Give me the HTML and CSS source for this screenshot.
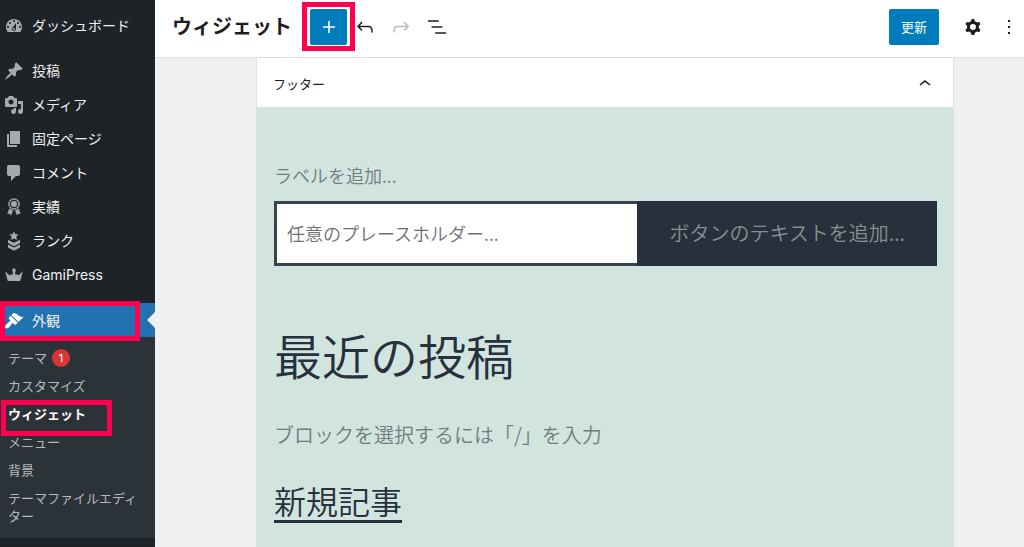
FILE: index.html
```html
<!DOCTYPE html>
<html lang="ja">
<head>
    <meta charset="UTF-8">
    <meta name="viewport" content="width=device-width, initial-scale=1.0">
    <title>ウィジェット</title>
    <link rel="stylesheet" href="styles.css">
</head>
<body>
    <nav class="sidebar">
        <ul class="menu">
            <li>
                <a href="#"><svg viewBox="0 0 20 20"><path d="M3.76 16h12.48c1.1-1.37 1.76-3.11 1.76-5 0-4.42-3.58-8-8-8s-8 3.58-8 8c0 1.89.66 3.63 1.76 5zM10 4c.55 0 1 .45 1 1s-.45 1-1 1-1-.45-1-1 .45-1 1-1zM6 6c.55 0 1 .45 1 1s-.45 1-1 1-1-.45-1-1 .45-1 1-1zm8 0c.55 0 1 .45 1 1s-.45 1-1 1-1-.45-1-1 .45-1 1-1zm-5.37 5.55L12 7v6c0 1.1-.9 2-2 2s-2-.9-2-2c0-.57.24-1.08.63-1.45zM4 10c.55 0 1 .45 1 1s-.45 1-1 1-1-.45-1-1 .45-1 1-1zm12 0c.55 0 1 .45 1 1s-.45 1-1 1-1-.45-1-1 .45-1 1-1zm-5 3c0-.55-.45-1-1-1s-1 .45-1 1 .45 1 1 1 1-.45 1-1z"/></svg>ダッシュボード</a>
            </li>
            <li class="separator"></li>
            <li>
                <a href="#"><svg viewBox="0 0 20 20"><path d="M10.44 3.02l1.82-1.82 6.36 6.35-1.83 1.82c-1.05-.68-2.48-.57-3.41.36l-.75.75c-.92.93-1.04 2.35-.35 3.41l-1.83 1.82-2.41-2.41-2.8 2.79c-.42.42-3.38 2.71-3.8 2.29s1.86-3.39 2.28-3.81l2.79-2.79L4.1 9.36l1.83-1.82c1.05.69 2.48.57 3.4-.36l.75-.75c.93-.92 1.05-2.35.36-3.41z"/></svg>投稿</a>
            </li>
            <li>
                <a href="#"><svg viewBox="0 0 20 20"><path d="M13 11V4c0-.55-.45-1-1-1h-1.67L9 1H5L3.67 3H2c-.55 0-1 .45-1 1v7c0 .55.45 1 1 1h10c.55 0 1-.45 1-1zM7 4.5c1.38 0 2.5 1.12 2.5 2.5S8.38 9.5 7 9.5 4.5 8.38 4.5 7 5.62 4.5 7 4.5zM14 6h5v10.5c0 1.38-1.12 2.5-2.5 2.5S14 17.88 14 16.5s1.12-2.5 2.5-2.5c.17 0 .34.02.5.05V9h-3V6zm-4 8.05V13h2v3.5c0 1.38-1.12 2.5-2.5 2.5S7 17.88 7 16.5 8.12 14 9.5 14c.17 0 .34.02.5.05z"/></svg>メディア</a>
            </li>
            <li>
                <a href="#"><svg viewBox="0 0 20 20"><path d="M6 15V2h10v13H6zm-1 1h8v2H3V5h2v11z"/></svg>固定ページ</a>
            </li>
            <li>
                <a href="#"><svg viewBox="0 0 20 20"><path d="M5 2h9c1.1 0 2 .9 2 2v7c0 1.1-.9 2-2 2h-2l-5 5v-5H5c-1.1 0-2-.9-2-2V4c0-1.1.9-2 2-2z"/></svg>コメント</a>
            </li>
            <li>
                <a href="#"><svg viewBox="0 0 20 20"><circle cx="10" cy="7" r="5" fill="none" stroke="currentColor" stroke-width="1.6" stroke-dasharray="2.2 .4"/><circle cx="10" cy="7" r="3"/><path d="M5.2 11.5l3.8 2-2 5-1.3-1.7-2.4.2zM14.8 11.5l-3.8 2 2 5 1.3-1.7 2.4.2z"/></svg>実績</a>
            </li>
            <li>
                <a href="#"><svg viewBox="0 0 20 20"><path d="M10 .3l1.4 2.900 3.200.4-2.300 2.200.6 3.200L10 7.500 7.100 9l.6-3.200-2.300-2.200 3.200-.4zM4 8.800l6 3 6-3v3.200l-6 3.200L4 12zM4 13.600l6 3 6-3v3l-6 3.200-6-3.200z"/></svg>ランク</a>
            </li>
            <li>
                <a href="#"><svg viewBox="0 0 20 20"><path d="M1 6l4.200 4.200 2.400-1 .6 1.200.8-2.800L8 5.300l2-2.500 2 2.500-1 2.300.8 2.800.6-1.200 2.400 1L19 6l-2.800 10H3.800z"/></svg>GamiPress</a>
            </li>
            <li class="separator wide"></li>
            <li class="current">
                <a href="#"><svg viewBox="0 0 20 20"><path d="M14.480 11.060L7.410 3.990l1.500-1.500c.5-.56 2.300-.47 3.510.32 1.210.8 1.430 1.280 2.910 2.100 1.180.64 2.450 1.260 4.450.85zm-.71.71L6.700 4.700 4.930 6.470c-.39.39-.39 1.020 0 1.410l1.060 1.060c.39.39.39 1.030 0 1.420-.6.6-1.430 1.110-2.210 1.690-.35.26-.7.53-1.010.84C1.430 14.230.4 16.080 1.400 17.070c.99 1 2.840-.03 4.180-1.360.31-.31.58-.66.85-1.020.57-.78 1.080-1.610 1.690-2.210.39-.39 1.020-.39 1.410 0l1.060 1.060c.39.39 1.020.39 1.410 0z"/></svg>外観</a>
                <span class="mark mark-menu"></span>
            </li>
        </ul>
        <ul class="submenu">
            <li><a href="#">テーマ<span class="badge">1</span></a></li>
            <li><a href="#">カスタマイズ</a></li>
            <li class="active"><a href="#">ウィジェット</a><span class="mark mark-submenu"></span></li>
            <li><a href="#">メニュー</a></li>
            <li><a href="#">背景</a></li>
            <li><a href="#">テーマファイルエディター</a></li>
        </ul>
    </nav>

    <div class="editor">
        <header class="toolbar">
            <h1>ウィジェット</h1>
            <div class="tools">
                <div class="inserter">
                    <button class="primary add" aria-label="ブロックを追加"><svg viewBox="0 0 24 24"><path d="M18 11.200h-5.200V6h-1.600v5.200H6v1.600h5.200V18h1.600v-5.200H18z"/></svg></button>
                    <span class="mark mark-add"></span>
                </div>
                <button class="icon" aria-label="元に戻す"><svg viewBox="0 0 24 24"><path d="M18.300 11.700c-.6-.6-1.400-.9-2.300-.9H6.700l2.900-3.300-1.100-1-4.500 5L8.500 16l1-1-2.700-2.700H16c.5 0 .9.2 1.300.5 1 1 1 3.400 1 4.500v.3h1.500v-.2c0-1.500 0-4.300-1.500-5.700z"/></svg></button>
                <button class="icon" aria-label="やり直す" disabled><svg viewBox="0 0 24 24"><path d="M15.600 6.500l-1.100 1 2.900 3.300H8c-.9 0-1.700.3-2.300.9-1.400 1.500-1.400 4.200-1.400 5.600v.2h1.500v-.3c0-1.100 0-3.500 1-4.500.3-.3.7-.5 1.300-.5h9.200L14.500 15l1.100 1.100 4.600-4.600-4.600-5z"/></svg></button>
                <button class="icon" aria-label="リスト表示"><svg viewBox="0 0 24 24"><path d="M13.800 5.200H3v1.500h10.800V5.200zm-3.600 12v1.500H21v-1.500H10.200zm7.200-6H6.600v1.500h10.800v-1.500z"/></svg></button>
            </div>
            <div class="actions">
                <button class="primary update">更新</button>
                <button class="icon" aria-label="設定"><svg viewBox="0 0 24 24"><path fill-rule="evenodd" d="M10.289 4.836A1 1 0 0111.275 4h1.306a1 1 0 01.987.836l.244 1.466c.787.26 1.503.679 2.108 1.218l1.393-.522a1 1 0 011.216.437l.653 1.130a1 1 0 01-.23 1.273l-1.148.944a6.025 6.025 0 010 2.435l1.149.946a1 1 0 01.23 1.272l-.653 1.130a1 1 0 01-1.216.437l-1.394-.522c-.605.54-1.320.958-2.108 1.218l-.244 1.466a1 1 0 01-.987.836h-1.306a1 1 0 01-.986-.836l-.244-1.466a5.995 5.995 0 01-2.108-1.218l-1.394.522a1 1 0 01-1.217-.436l-.653-1.131a1 1 0 01.23-1.272l1.149-.946a6.026 6.026 0 010-2.435l-1.148-.944a1 1 0 01-.23-1.272l.653-1.131a1 1 0 011.217-.437l1.393.522a5.994 5.994 0 012.108-1.218l.244-1.466zM14.929 12a3 3 0 11-6 0 3 3 0 016 0z"/></svg></button>
                <button class="icon more" aria-label="オプション"><svg viewBox="0 0 24 24"><path d="M13 19h-2v-2h2v2zm0-6h-2v-2h2v2zm0-6h-2V5h2v2z"/></svg></button>
            </div>
        </header>

        <main class="content">
            <section class="area">
                <button class="area-title">フッター<svg viewBox="0 0 24 24"><path d="M6.500 12.400L12 8l5.500 4.400-.9 1.200L12 10l-4.500 3.600-1-1.200z"/></svg></button>
                <div class="blocks">
                    <label class="search-label" for="search">ラベルを追加...</label>
                    <div class="search">
                        <input type="text" id="search" placeholder="任意のプレースホルダー...">
                        <button>ボタンのテキストを追加...</button>
                    </div>
                    <h2>最近の投稿</h2>
                    <p class="prompt">ブロックを選択するには「/」を入力</p>
                    <a class="post" href="#">新規記事</a>
                </div>
            </section>
        </main>
    </div>
</body>
</html>
```

FILE: styles.css
```css
* {
    box-sizing: border-box;
}
body {
    display: flex;
    min-height: 100vh;
    margin: 0;
    font-family: Inter, "Noto Sans CJK JP", sans-serif;
    font-size: 13px;
    color: #1e1e1e;
    background-color: #f0f0f0;
}
h1, h2, p, ul {
    margin: 0;
    padding: 0;
}
ul {
    list-style: none;
}
a {
    color: inherit;
    text-decoration: none;
}
button, input {
    font: inherit;
    color: inherit;
    margin: 0;
    border: none;
    border-radius: 0;
}
button {
    padding: 0;
    background: none;
    cursor: pointer;
}
svg {
    flex: none;
    fill: currentColor;
}

/* Red frames around the steps to click */
.mark {
    position: absolute;
    border: 5px solid #ff0050;
    pointer-events: none;
    z-index: 1;
}
.mark-menu {
    inset: -2px 15px -4px 0;
}
.mark-submenu {
    inset: 0 43px -8px 1px;
}
.mark-add {
    inset: -7px -8px -6px -8px;
}

/* Sidebar */
.sidebar {
    flex: none;
    width: 155px;
    padding-top: 8px;
    background-color: #1d2327;
}
.menu a {
    display: flex;
    align-items: center;
    gap: 8px;
    height: 34px;
    padding-left: 4px;
    font-size: 14px;
    color: #f0f0f1;
}
.menu svg {
    width: 20px;
    height: 20px;
    margin-top: 2px;
    color: #a7aaad;
}
.separator {
    height: 11px;
}
.separator.wide {
    height: 12px;
}
.current {
    position: relative;
    background-color: #2271b1;
}
.current::after {
    content: "";
    position: absolute;
    top: 9px;
    right: 0;
    border: 8px solid transparent;
    border-left: none;
    border-right-color: #f0f0f1;
}
.menu .current svg {
    color: #fff;
}
.submenu {
    padding: 7px 0 8px;
    background-color: #2c3338;
    color: #b4b9be;
}
.submenu li {
    position: relative;
}
.submenu a {
    display: block;
    padding: 5px 8px;
    line-height: 18px;
}
.submenu .active {
    color: #fff;
    font-weight: 700;
}
.badge {
    display: inline-block;
    width: 18px;
    margin-left: 5px;
    border-radius: 9px;
    background-color: #d63638;
    color: #fff;
    font-size: 11px;
    line-height: 18px;
    text-align: center;
    vertical-align: top;
}

/* Toolbar */
.editor {
    display: flex;
    flex-direction: column;
    flex: 1;
    min-width: 0;
}
.toolbar {
    display: flex;
    flex: none;
    align-items: center;
    height: 58px;
    padding: 0 0 4px 17px;
    border-bottom: 1px solid #e0e0e0;
    background-color: #fff;
}
.toolbar h1 {
    font-size: 20px;
    line-height: 28px;
}
.tools, .actions {
    display: flex;
    align-items: center;
}
.tools {
    margin-left: 18px;
}
.actions {
    margin-left: auto;
}
.inserter {
    position: relative;
}
.primary {
    display: flex;
    align-items: center;
    justify-content: center;
    height: 36px;
    border-radius: 2px;
    background-color: #007cba;
    color: #fff;
}
.add {
    width: 37px;
}
.update {
    width: 50px;
    margin-right: 16px;
}
.icon {
    display: flex;
    align-items: center;
    justify-content: center;
    width: 36px;
    height: 36px;
}
.icon:disabled {
    color: #bbb;
}
.more {
    width: 30px;
    margin-left: 3px;
}
.toolbar svg, .area-title svg {
    width: 24px;
    height: 24px;
}

/* Widget area */
.content {
    display: flex;
    flex: 1;
    padding: 0 70px 0 101px;
}
.area {
    flex: 1;
    min-width: 0;
    border: 1px solid #e0e0e0;
    border-width: 0 1px;
    background-color: #d1e4dd;
}
.area-title {
    display: flex;
    align-items: center;
    justify-content: space-between;
    width: 100%;
    height: 49px;
    padding: 2px 16px 0;
    background-color: #fff;
}
.blocks {
    padding: 56px 16px 20px 17px;
    color: #28303d;
    font-family: "Noto Sans CJK JP", sans-serif;
    font-weight: 350;
}
.search-label {
    display: block;
    margin-bottom: 14px;
    font-size: 18px;
    line-height: 24px;
    color: #6f7d7f;
}
.search {
    display: flex;
    height: 65px;
}
.search input {
    flex: 1;
    min-width: 0;
    padding: 0 10px 2px;
    border: 3px solid #39414d;
    border-right: none;
    background-color: #fff;
    font-size: 18px;
}
.search input::placeholder {
    color: #6c7079;
}
.search button {
    padding: 0 32px 2px;
    background-color: #28303d;
    color: #85918f;
    font-size: 20px;
}
.blocks h2 {
    margin-top: 58px;
    font-size: 48px;
    font-weight: 350;
    line-height: 60px;
}
.prompt {
    margin-top: 36px;
    font-size: 20px;
    line-height: 30px;
    color: #6f7d7f;
}
.post {
    display: inline-block;
    margin-top: 26px;
    font-size: 32px;
    line-height: 48px;
    text-decoration: underline;
    text-decoration-thickness: 3px;
    text-underline-offset: 6px;
}
```
